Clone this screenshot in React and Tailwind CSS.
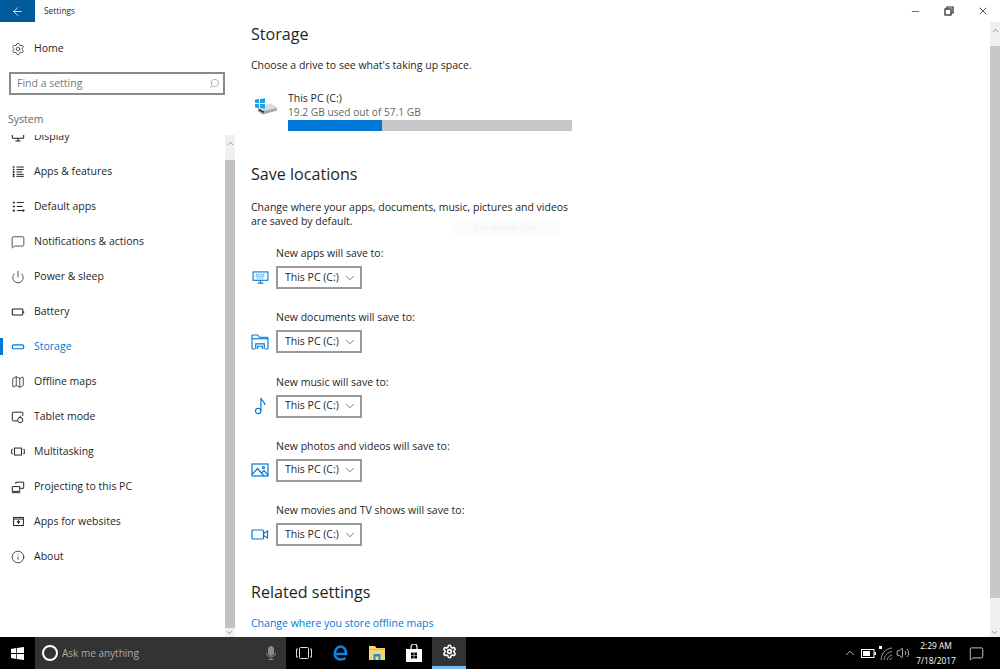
import { ArrowLeft, ChevronDown, ChevronUp, Info, Map, MessageSquare, Minus, Power, Search, Settings, Volume2, X } from 'lucide-react';

const ink = 'text-[#1f1f1f]';

function AppsIcon() {
  return (
    <svg width="13" height="13" viewBox="0 0 16 16" fill="none" stroke="currentColor" strokeWidth="1.200">
      <path d="M5.500 2.500h9M5.500 5.500h9M5.500 8.500h7M5.500 11.500h9M5.500 14h9" />
      <path d="M1 2.500h2M1 5.500h2M1 8.500h2M1 11.500h2M1 14h2" strokeWidth="2" />
    </svg>
  );
}

function DefaultAppsIcon() {
  return (
    <svg width="13" height="13" viewBox="0 0 16 16" fill="none" stroke="currentColor" strokeWidth="1.200">
      <path d="M6 3h8.500M6 8h7M6 13h9M13.500 11.500l1.500 1.500-1.500 1.500" />
      <path d="M1 3h2.500M1 8h2.500M1 13h2.500" strokeWidth="2" />
    </svg>
  );
}

function BatteryIcon() {
  return (
    <svg width="14" height="14" viewBox="0 0 16 16" fill="none" stroke="currentColor" strokeWidth="1.200">
      <rect x="1.500" y="4.500" width="12" height="7" rx="1" />
      <path d="M14.500 7v2" />
    </svg>
  );
}

function StorageIcon() {
  return (
    <svg width="14" height="14" viewBox="0 0 16 16" fill="none" stroke="currentColor" strokeWidth="1.400">
      <rect x="1.500" y="5.500" width="13" height="4.500" rx="1.500" />
    </svg>
  );
}

function TabletIcon() {
  return (
    <svg width="14" height="14" viewBox="0 0 16 16" fill="none" stroke="currentColor" strokeWidth="1.100">
      <path d="M7 12.500H2.500a1 1 0 0 1-1-1v-8a1 1 0 0 1 1-1h10a1 1 0 0 1 1 1V7" />
      <circle cx="10.500" cy="11.500" r="3" />
      <path d="M10.500 6.500v3" />
    </svg>
  );
}

function MultitaskIcon() {
  return (
    <svg width="14" height="14" viewBox="0 0 16 16" fill="none" stroke="currentColor" strokeWidth="1.100">
      <rect x="4" y="3.500" width="8" height="8" />
      <path d="M2 5H.8v5H2M14 5h1.200v5H14" />
    </svg>
  );
}

function ProjectIcon() {
  return (
    <svg width="14" height="14" viewBox="0 0 16 16" fill="none" stroke="currentColor" strokeWidth="1.100">
      <path d="M5.500 4.500V2.500h9v7h-4" />
      <path d="M1.500 7.500h8.500v5.500H1.500zM1 14.500h9.500" />
    </svg>
  );
}

function WebAppIcon() {
  return (
    <svg width="13" height="13" viewBox="0 0 16 16" fill="none" stroke="currentColor" strokeWidth="1.200">
      <rect x="2" y="3" width="12" height="10" />
      <path d="M2 5h12" />
      <path d="M8 11V7M6 9l2-2 2 2" strokeWidth="1.300" />
    </svg>
  );
}

function DisplayIcon() {
  return (
    <svg width="14" height="14" viewBox="0 0 16 16" fill="none" stroke="currentColor" strokeWidth="1.200">
      <path d="M1.500 2v6.500a1 1 0 0 0 1 1h11a1 1 0 0 0 1-1V2" />
      <path d="M8 9.500v3M5 12.500h6" />
    </svg>
  );
}

function KeyboardMonitorIcon() {
  return (
    <svg width="17" height="13" viewBox="0 0 18 14" fill="none" stroke="#0078d7" strokeWidth="1.200">
      <rect x="1" y="1" width="16" height="9" />
      <path d="M9 10v3M6 13h6" />
      <path d="M4 3.500h10M4 5.500h10M5 7.500h8" strokeDasharray="1 1" />
    </svg>
  );
}

function FolderIcon() {
  return (
    <svg width="18" height="16" viewBox="0 0 19 17" fill="none" stroke="#0078d7" strokeWidth="1.200">
      <path d="M4 16H2a1 1 0 0 1-1-1V2a1 1 0 0 1 1-1h5l2 2.500h8a1 1 0 0 1 1 1V15a1 1 0 0 1-1 1h-2" />
      <path d="M1 5h17" />
      <path d="M5 16v-5.500h9V16M7 16v-3h5v3" />
    </svg>
  );
}

function MusicIcon() {
  return (
    <svg width="12" height="18" viewBox="0 0 13 20" fill="none" stroke="#0078d7" strokeWidth="1.300">
      <circle cx="4.500" cy="15.500" r="3" />
      <path d="M7.500 15.500V1c.5 3 4.500 4 4.500 8" />
    </svg>
  );
}

function PhotoIcon() {
  return (
    <svg width="18" height="14" viewBox="0 0 18 14" fill="none" stroke="#0078d7" strokeWidth="1.200">
      <rect x="1" y="1" width="16" height="12" />
      <path d="M1 11.500l5.500-6 6.500 7.500M10.500 10l2.500-2.500 4 4.500" />
      <circle cx="12.500" cy="4.500" r="1" />
    </svg>
  );
}

function VideoIcon() {
  return (
    <svg width="18" height="11" viewBox="0 0 18 11" fill="none" stroke="#0078d7" strokeWidth="1.200">
      <rect x="1" y="1" width="11.500" height="9" rx="1" />
      <path d="M12.500 4.500l4-2.500v7l-4-2.500" />
    </svg>
  );
}

function DriveIcon() {
  return (
    <svg width="24" height="17" viewBox="0 0 24 17">
      <path d="M4 9l13-3.500 6 3.500v3L9 16.500 4 13z" fill="#dcdcdc" />
      <path d="M4 10l5 3 14-3v2.500L9 16.500 4 13.500z" fill="#a8a8a8" />
      <path d="M5 11l5 2.500V15l-5-2.500z" fill="#222" />
      <path d="M1 1.600 5 1v4H1zM6 .9 11 .2V5H6zM1 6h4v4l-4-.6zM6 6h5v4.800l-5-.7z" fill="#1da1e8" />
    </svg>
  );
}

function RestoreIcon() {
  return (
    <svg width="10" height="10" viewBox="0 0 10 10" fill="none" stroke="#222" strokeWidth="1.200">
      <rect x="1" y="3" width="6" height="6" />
      <path d="M3 3V1h6v6H7" />
    </svg>
  );
}

function WindowsLogo() {
  return (
    <svg width="13" height="13" viewBox="0 0 13 13" fill="#fff">
      <path d="M0 1.900 5.300 1.100v5H0zM6 1 13 0v6.100H6zM0 6.900h5.300v5L0 11.100zM6 6.900h7V13l-7-1z" />
    </svg>
  );
}

function TaskViewIcon() {
  return (
    <svg width="16" height="12" viewBox="0 0 16 12" fill="none" stroke="#ddd" strokeWidth="1">
      <rect x="3.500" y=".5" width="9" height="11" rx="1" />
      <path d="M2 2H.5v8H2M14 2h1.500v8H14" />
    </svg>
  );
}

function EdgeIcon() {
  return (
    <svg width="15" height="16" viewBox="0 0 15 16" fill="none" stroke="#0a84e6" strokeWidth="2.600">
      <path d="M1.800 9h11.200C13.200 4.500 10.800 1.500 7.500 1.500 4.300 1.500 1.800 5 1.800 9c0 3.500 2.500 5.500 5.700 5.500 2 0 3.700-.5 5-1.500" />
    </svg>
  );
}

function ExplorerIcon() {
  return (
    <svg width="16" height="14" viewBox="0 0 16 14">
      <path d="M0 0h6l1.500 2H16v12H0z" fill="#f5d76e" />
      <path d="M0 3.500h16" stroke="#e7b93c" />
      <path d="M4.500 14V8h7v6H9.500v-3.500h-3V14z" fill="#1d8fe0" />
    </svg>
  );
}

function StoreIcon() {
  return (
    <svg width="16" height="18" viewBox="0 0 16 18">
      <path d="M5 5V3a3 3 0 0 1 6 0v2" fill="none" stroke="#fff" strokeWidth="1.200" />
      <path d="M0 5h16v13H0z" fill="#fff" />
      <path d="M5 8.500h2.700v2.700H5zM8.300 8.500H11v2.700H8.300zM5 11.800h2.700v2.700H5zM8.300 11.800H11v2.700H8.300z" fill="#000" />
    </svg>
  );
}

function MicIcon() {
  return (
    <svg width="10" height="14" viewBox="0 0 10 14" fill="none" stroke="#8a8a8a">
      <rect x="2.500" y=".5" width="5" height="9" rx="2.500" fill="#8a8a8a" />
      <path d="M.5 6.500c0 6 9 6 9 0M5 11v3M2.500 13.500h5" />
    </svg>
  );
}

function TrayBattery() {
  return (
    <svg width="15" height="9" viewBox="0 0 15 9">
      <rect x=".5" y=".5" width="12.500" height="8" fill="none" stroke="#fff" />
      <rect x="2" y="2" width="7" height="5" fill="#fff" />
      <rect x="13.500" y="3" width="1.500" height="3" fill="#fff" />
    </svg>
  );
}

function TrayWifi() {
  return (
    <svg width="14" height="15" viewBox="0 0 14 15" fill="none" stroke="#9a9a9a" strokeWidth="1">
      <path d="M13 2C7 2.500 2.500 7 2 14M13 5.500C9 6 5.500 9.500 5 14M13 9c-2.500.5-4.500 2.500-5 5M13 12c-1 .2-1.800 1-2 2" />
      <rect x="0" y="0" width="3" height="3" fill="#fff" stroke="none" />
    </svg>
  );
}

const navItems = [
  ['Apps & features', <AppsIcon />],
  ['Default apps', <DefaultAppsIcon />],
  ['Notifications & actions', <MessageSquare size={14} strokeWidth={1.300} />],
  ['Power & sleep', <Power size={14} strokeWidth={1.300} />],
  ['Battery', <BatteryIcon />],
  ['Storage', <StorageIcon />, true],
  ['Offline maps', <Map size={14} strokeWidth={1.300} />],
  ['Tablet mode', <TabletIcon />],
  ['Multitasking', <MultitaskIcon />],
  ['Projecting to this PC', <ProjectIcon />],
  ['Apps for websites', <WebAppIcon />],
  ['About', <Info size={14} strokeWidth={1.300} />],
];

const saveRows = [
  ['New apps will save to:', <KeyboardMonitorIcon />],
  ['New documents will save to:', <FolderIcon />],
  ['New music will save to:', <MusicIcon />],
  ['New photos and videos will save to:', <PhotoIcon />],
  ['New movies and TV shows will save to:', <VideoIcon />],
];

function NavItem({ label, icon, active }) {
  return (
    <div className={`relative flex h-[35px] items-center gap-[8px] pl-[10px] text-[10.5px] ${active ? 'text-[#0078d7]' : ink}`}>
      {active && <div className="absolute left-0 top-[9px] h-[17px] w-[3px] bg-[#0078d7]" />}
      <span className="flex h-4 w-4 items-center justify-center">{icon}</span>
      <span>{label}</span>
    </div>
  );
}

function SaveRow({ label, icon }) {
  return (
    <div className="flex h-[64.25px] flex-col">
      <div className={`pl-[25px] text-[10.5px] leading-[16px] ${ink}`}>{label}</div>
      <div className="mt-[5px] flex items-center">
        <span className="mr-[7px] flex w-[18px] items-center justify-center">{icon}</span>
        <div className={`flex h-[23px] w-[86px] items-center justify-between whitespace-nowrap border-2 border-[#9a9a9a] pl-[7px] pr-[3px] text-[10.5px] ${ink}`}>
          <span>This PC (C:)</span>
          <ChevronDown size={14} strokeWidth={1} />
        </div>
      </div>
    </div>
  );
}

export default function App() {
  return (
    <div className="flex h-[669px] w-[1000px] flex-col overflow-hidden bg-white font-['Open_Sans',sans-serif]">
      {/* Title bar */}
      <div className="flex h-[22px] shrink-0 items-center">
        <div className="flex h-full w-[35px] items-center justify-center bg-[#005a9e] text-white">
          <ArrowLeft size={13} strokeWidth={1.500} />
        </div>
        <span className={`ml-[9px] text-[8.4px] ${ink}`}>Settings</span>
        <div className="ml-auto flex items-center gap-[23px] pr-[11px]">
          <Minus size={11} strokeWidth={1.500} className="text-[#333]" />
          <RestoreIcon />
          <X size={12} strokeWidth={1.500} className="text-[#222]" />
        </div>
      </div>

      <div className="flex min-h-0 flex-1">
        {/* Sidebar */}
        <aside className="flex w-[235px] shrink-0 flex-col">
          <div className={`flex h-[33px] shrink-0 items-center gap-[8px] pl-[10px] pt-[20px] text-[10.5px] ${ink}`}>
            <span className="flex w-4 justify-center"><Settings size={14} strokeWidth={1.200} /></span>
            <span>Home</span>
          </div>
          <div className="mx-[9px] mt-[17px] flex h-[23px] w-[216px] shrink-0 items-center justify-between border-2 border-[#8a8a8a] pl-[6px] pr-[3px] text-[10.5px] text-[#777]">
            <span>Find a setting</span>
            <Search size={11} strokeWidth={1.200} className="-scale-x-100" />
          </div>
          <div className="mt-[16px] shrink-0 pl-[8px] text-[10.5px] leading-[16px] text-[#666]">System</div>
          <div className="mt-[8px] flex min-h-0 flex-1">
            <div className="min-w-0 flex-1 overflow-hidden">
              <div className="-mt-[16px]">
                <NavItem label="Display" icon={<DisplayIcon />} />
                {navItems.map(([label, icon, active]) => (
                  <NavItem key={label} label={label} icon={icon} active={active} />
                ))}
              </div>
            </div>
            <div className="flex w-[10px] flex-col bg-[#f0f0f0] text-[#777]">
              <ChevronUp size={9} className="mx-auto mt-[4px]" />
              <div className="mt-[12px] flex-1 bg-[#c2c2c2]" />
              <ChevronDown size={9} />
            </div>
          </div>
        </aside>

        {/* Main */}
        <main className="relative min-w-0 flex-1 pl-[16px]">
          <h1 className={`text-[16.1px] leading-[24px] ${ink}`}>Storage</h1>
          <p className={`mt-[11px] text-[10.5px] leading-[16px] ${ink}`}>Choose a drive to see what's taking up space.</p>

          <div className="mt-[18px] flex items-start">
            <span className="mt-[7px] w-[37px] pl-[3px]"><DriveIcon /></span>
            <div>
              <div className={`text-[10.5px] leading-[14px] ${ink}`}>This PC (C:)</div>
              <div className="text-[10.2px] leading-[15px] text-[#666]">19.2 GB used out of 57.1 GB</div>
              <div className="flex h-[11px] w-[284px] bg-[#c6c6c6]">
                <div className="w-[94px] bg-[#0078d7]" />
              </div>
            </div>
          </div>

          <h2 className={`mt-[31px] text-[16.1px] leading-[24px] ${ink}`}>Save locations</h2>
          <p className={`mt-[14px] w-[320px] text-[10.5px] leading-[14px] ${ink}`}>
            Change where your apps, documents, music, pictures and videos are saved by default.
          </p>

          {/* faint leftover tooltip from the capture */}
          <div className="absolute left-[216px] top-[200px] flex h-[13px] w-[109px] items-center justify-center bg-[#fafcfe] text-[8.5px] text-[#eef2f7]">
            Full screen Snip
          </div>

          <div className="mt-[17px]">
            {saveRows.map(([label, icon]) => (
              <SaveRow key={label} label={label} icon={icon} />
            ))}
          </div>

          <h2 className={`mt-[14px] text-[16.1px] leading-[24px] ${ink}`}>Related settings</h2>
          <p className="mt-[11px] text-[10.5px] leading-[16px] text-[#0078d7]">Change where you store offline maps</p>
        </main>

        <div className="flex w-[10px] shrink-0 flex-col bg-[#f0f0f0] text-[#777]">
          <ChevronUp size={9} className="mx-auto mt-[4px]" />
          <div className="mt-[11px] h-[552px] bg-[#c8c8c8]" />
          <ChevronDown size={9} className="mt-auto" />
        </div>
      </div>

      {/* Taskbar */}
      <div className="flex h-[32px] shrink-0 items-center bg-black text-white">
        <div className="flex h-full w-[35px] items-center justify-center"><WindowsLogo /></div>
        <div className="flex h-full w-[251px] items-center bg-[#333] pl-[7px] pr-[10px] text-[10px] text-[#aaa]">
          <div className="h-[16px] w-[16px] rounded-full border-2 border-white" />
          <span className="ml-[4px]">Ask me anything</span>
          <span className="ml-auto"><MicIcon /></span>
        </div>
        <div className="flex h-full w-[36.5px] items-center justify-center"><TaskViewIcon /></div>
        <div className="flex h-full w-[36.5px] items-center justify-center"><EdgeIcon /></div>
        <div className="flex h-full w-[36.5px] items-center justify-center"><ExplorerIcon /></div>
        <div className="flex h-full w-[36.5px] items-center justify-center"><StoreIcon /></div>
        <div className="flex h-full w-[34px] items-center justify-center border-b-[3px] border-[#76b9ed] bg-[#333]">
          <Settings size={15} strokeWidth={2.500} />
        </div>
        <div className="ml-auto flex h-full items-center">
          <ChevronUp size={14} strokeWidth={1.300} />
          <span className="ml-[4px]"><TrayBattery /></span>
          <span className="ml-[3px]"><TrayWifi /></span>
          <Volume2 size={14} strokeWidth={1.200} className="ml-[3px]" />
          <div className="ml-[1px] w-[50px] text-center text-[8.4px] leading-[15px]">
            <div>2:29 AM</div>
            <div>7/18/2017</div>
          </div>
          <MessageSquare size={15} strokeWidth={1.200} className="ml-[8px] mr-[16px]" />
        </div>
      </div>
    </div>
  );
}
